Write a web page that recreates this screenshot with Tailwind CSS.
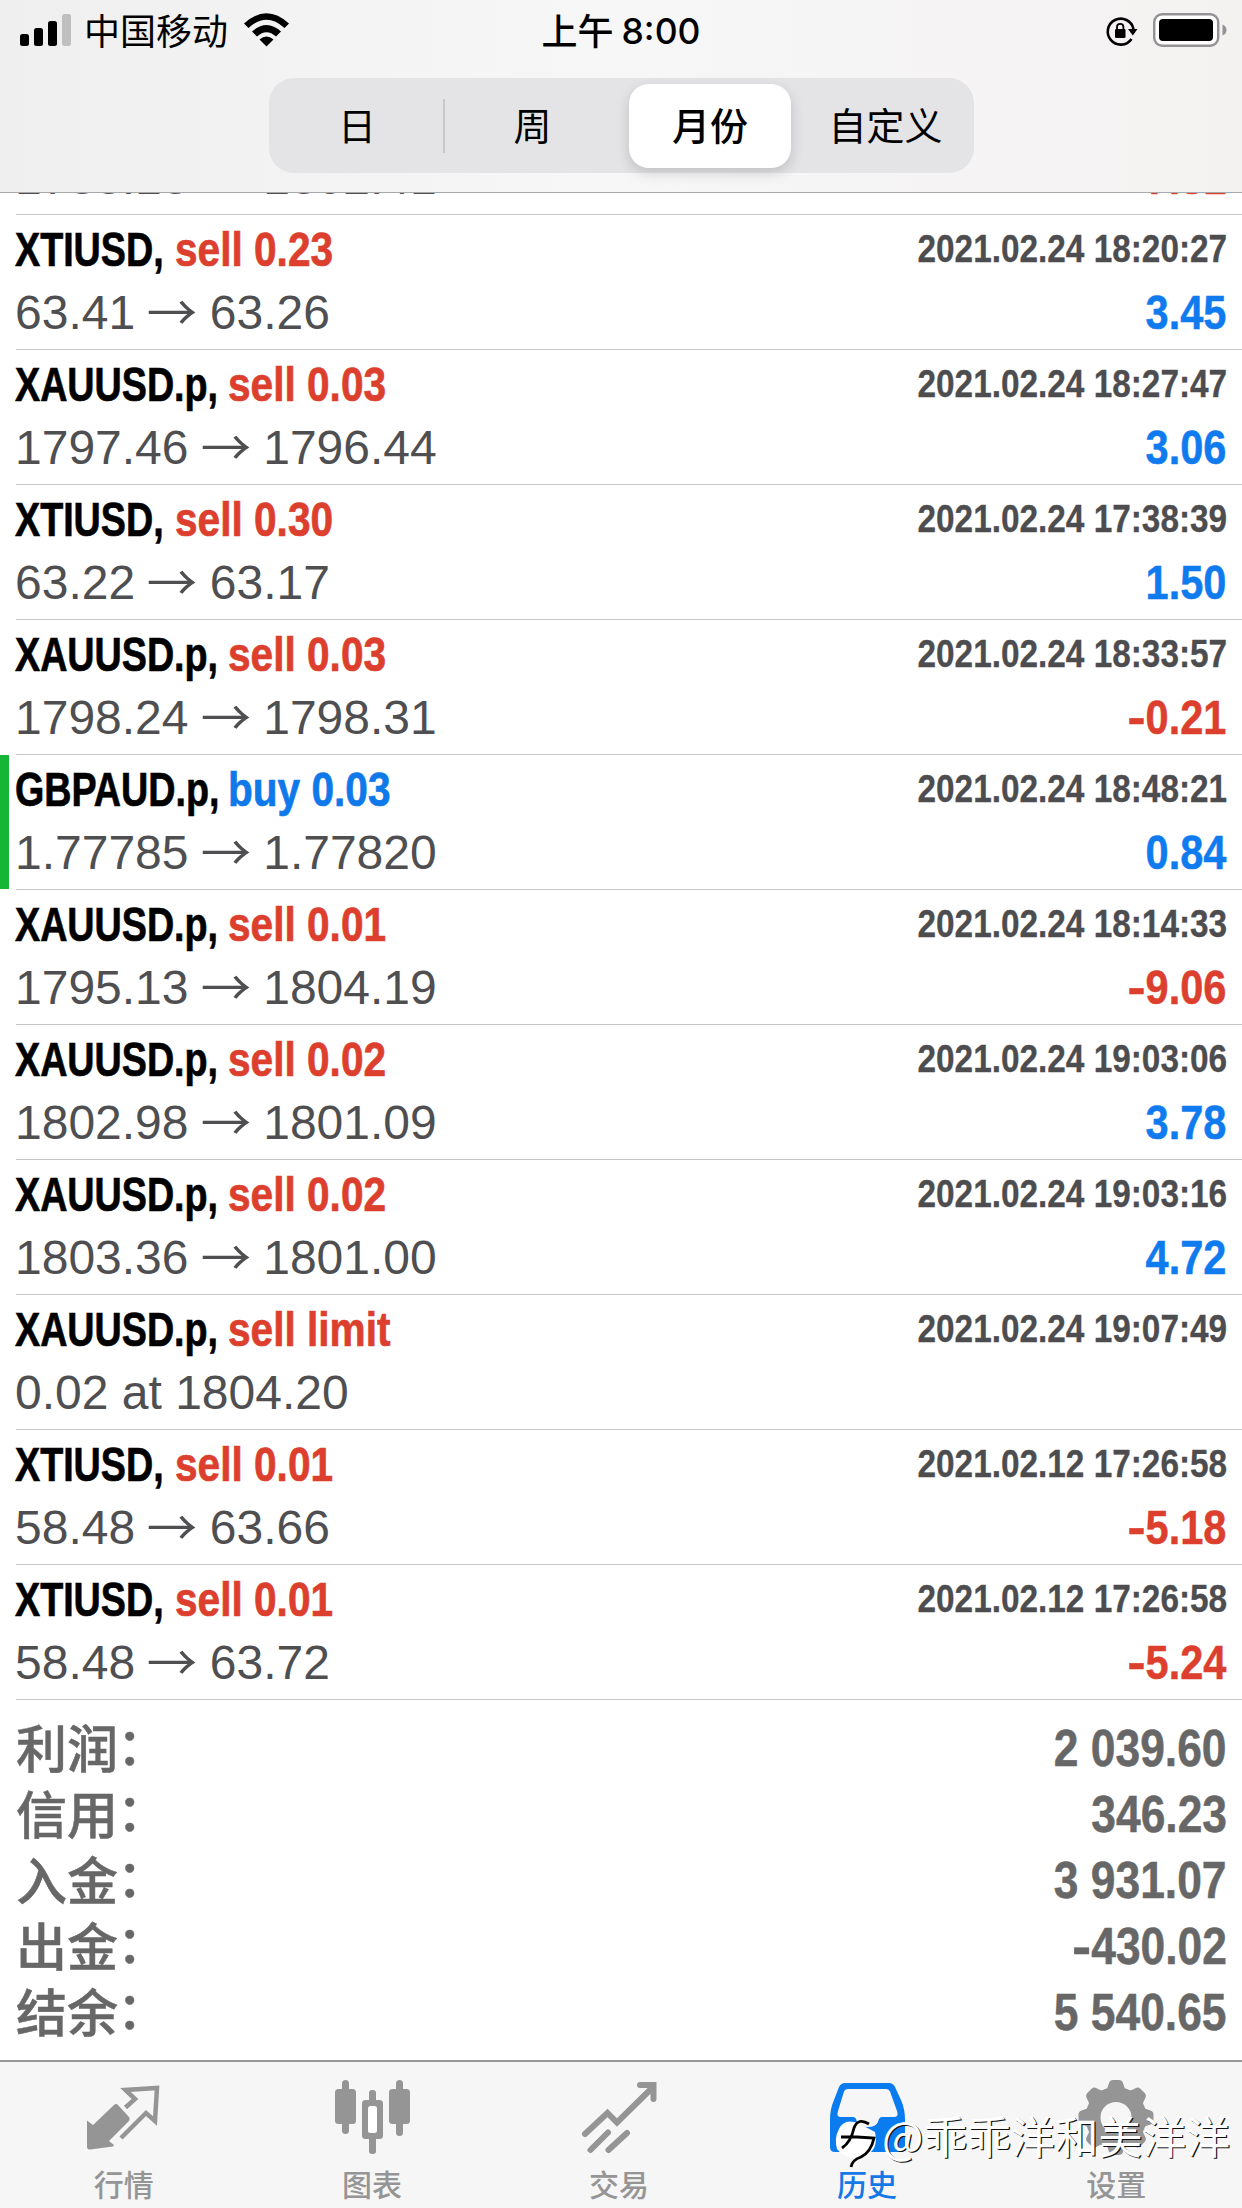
<!DOCTYPE html>
<html lang="zh-CN">
<head>
<meta charset="utf-8">
<title>历史</title>
<script src="https://cdn.jsdelivr.net/npm/@tailwindcss/browser@4"></script>
</head>
<body class="w-[1242px] h-[2208px] overflow-hidden bg-white flex flex-col font-['Liberation_Sans','Noto_Sans_CJK_SC',sans-serif] text-black">

<header class="relative z-10 h-[193px] shrink-0 border-b border-[#a9a9ab] bg-linear-to-r from-[#efefef] via-[#f7f7f8] to-[#f4f1f1] font-['Noto_Sans_CJK_SC',sans-serif]">
  <div class="h-[78px] grid grid-cols-3">
    <div class="flex items-start pl-5 pt-3">
      <svg class="w-[52px] h-[36px]" viewBox="0 0 52 36"><rect x="0" y="22" width="9" height="12" rx="2.5"/><rect x="14" y="16" width="9" height="18" rx="2.5"/><rect x="28" y="9" width="9" height="25" rx="2.5"/><rect x="42" y="2" width="9" height="32" rx="2.5" fill="#bfbfbf"/></svg>
      <span class="ml-3 text-[36px] leading-[35px]">中国移动</span>
      <svg class="ml-[15px] w-[47px] h-[36px]" viewBox="0 0 47 36"><path d="M1 11.500Q23.500-9 46 11.500L41.500 16Q23.500-.5 5.500 16Z"/><path d="M9 19.500Q23.500 6.500 38 19.500L33 24.500Q23.500 16 14 24.500Z"/><path d="M16.500 27.500Q23.500 21.500 30.500 27.500L23.500 34.500Z"/></svg>
    </div>
    <div class="flex justify-center pt-3 text-[36px] leading-[35px] font-medium">上午<span class="ml-2 pt-[2px] font-['Inter'] text-[35.500px]">8:00</span></div>
    <div class="flex justify-end pr-[15px] pt-3">
      <svg class="w-[34px] h-[36px]" viewBox="0 0 34 36"><path d="M26.500 27A13 13 0 1 1 28.500 17" fill="none" stroke="#000" stroke-width="2.6"/><path d="M23 17h9.500l-4.700 6.500z"/><rect x="10" y="17" width="10.500" height="9" rx="1.200"/><path d="M12 18v-3a3.200 3.200 0 0 1 6.400 0v3" fill="none" stroke="#000" stroke-width="1.800"/></svg>
      <svg class="ml-[14px] w-[74px] h-[36px]" viewBox="0 0 74 36"><rect x="1.200" y="2.200" width="64" height="31.500" rx="8" fill="#fff" stroke="#949294" stroke-width="2.400"/><rect x="6" y="7" width="54" height="22" rx="4"/><path d="M69.500 12.500q4 1.500 4 5.500t-4 5.500z" fill="#949294"/></svg>
    </div>
  </div>
  <div class="ml-[269px] w-[705px] h-[95px] rounded-[25px] bg-[#e4e4e6] p-[6px] grid grid-cols-[170px_184px_165px_1fr] text-[38px] leading-[80px] text-center">
    <span class="relative pr-[6px]">日<i class="absolute right-0 top-[15px] h-[54px] w-[2px] bg-[#c9c9cc]"></i></span>
    <span class="pr-[9px]">周</span>
    <span class="h-[84px] w-[162px] rounded-[20px] bg-white font-medium shadow-[0_5px_14px_rgba(0,0,0,0.16)]">月份</span>
    <span class="pl-[9px]">自定义</span>
  </div>
</header>

<main class="h-[1867px] shrink-0 overflow-hidden">
  <section id="deals" class="-mt-[113px] pl-4"></section>
  <section id="totals" class="pl-4 pr-[15px] pt-4 text-[#676767] text-[51px]"></section>
</main>

<footer class="relative h-[148px] shrink-0 border-t-2 border-[#98989b] bg-[#f6f6f6] grid grid-cols-5 text-[#959595] font-['Noto_Sans_CJK_SC',sans-serif] text-[30px] font-medium leading-[38px] text-center">
  <div class="-ml-px flex flex-col items-center gap-[6px] pt-3">
    <svg class="w-[78px] h-[84px]" viewBox="0 0 78 84"><path d="M2 46.500L8 51 29 31q2-2 4 0L44 43q1.500 2 0 4L24 67l5 4-1 1.500L5 75.500q-3 .500-3-3z" fill="currentColor"/><path d="M40.500 33.500L50 25 40.500 16 72 14 70 47 61 39 36 64" fill="none" stroke="currentColor" stroke-width="4.500"/></svg>
    <span>行情</span>
  </div>
  <div class="-ml-px flex flex-col items-center gap-[6px] pt-3">
    <svg class="w-[78px] h-[84px]" viewBox="0 0 78 84" fill="currentColor"><rect x="9" y="6" width="7" height="54" rx="3.500"/><rect x="2" y="15" width="21" height="35" rx="3.500"/><rect x="63" y="6" width="7" height="56" rx="3.500"/><rect x="56" y="15" width="21" height="35" rx="3.500"/><rect x="36" y="16" width="7" height="64" rx="3"/><rect x="29" y="26" width="21" height="39" rx="3.500"/><rect x="35" y="32" width="9" height="27" rx="2.500" fill="#fff"/></svg>
    <span>图表</span>
  </div>
  <div class="-ml-[4px] flex flex-col items-center gap-[6px] pt-3">
    <svg class="w-[78px] h-[84px]" viewBox="0 0 78 84" fill="none" stroke="currentColor" stroke-width="6" stroke-linecap="round"><path d="M5 60L27.500 39 37 48.500 73 13"/><path d="M60 11H73.500V25"/><path d="M10.500 76L28 58.500M28.500 76L47 59"/></svg>
    <span>交易</span>
  </div>
  <div class="-ml-[5px] flex flex-col items-center gap-[6px] pt-3 text-[#1478e6]">
    <svg class="w-[78px] h-[84px]" viewBox="0 0 78 84"><path d="M17 9H61Q65 9 67 13L73 26Q77 35 77 46V73Q77 78 72 78H7Q2 78 2 73V46Q2 35 6 26L11 13Q13 9 17 9Z" fill="#0a7cf0"/><path d="M19.500 15H58.500Q61 15 62 17.500L69 37Q71 43 66 43H54Q51 43 50 48Q48 53 39.500 53T29 48Q28 43 25 43H13Q8 43 10 37L16 17.500Q17 15 19.500 15Z" fill="#f6f6f6"/></svg>
    <span>历史</span>
  </div>
  <div class="-ml-[3px] flex flex-col items-center gap-[6px] pt-3">
    <svg class="w-[78px] h-[84px]" viewBox="0 0 78 84" fill="currentColor"><g id="gear"></g><circle cx="39" cy="43.500" r="15.500" fill="#f6f6f6"/></svg>
    <span>设置</span>
  </div>
  <div class="absolute left-[834px] top-[46px] flex items-start font-normal text-white whitespace-nowrap">
    <svg class="mt-[8px] w-[48px] h-[54px]" viewBox="0 0 48 54"><path d="M5 13Q10 2 24 7L41 16Q45 35 30 40Q12 45 3 33Q0 22 5 13Z" fill="#fff"/><path d="M35 8Q24 1 20 12Q17 26 8 32M7 21H23L40 22Q37 36 27 41Q18 44 17 51" fill="none" stroke="#000" stroke-width="2.800"/></svg>
    <span class="text-[43.800px] leading-[54px] [text-shadow:1.200px_1.200px_0_#111]">@乖乖洋和美洋洋</span>
  </div>
</footer>

<script>
const deals = [
  ['XAUUSD.p,', 'sell 0.03', '2021.02.24 18:18:18', '1788.18', '1802.41', '-7.81'],
  ['XTIUSD,', 'sell 0.23', '2021.02.24 18:20:27', '63.41', '63.26', '3.45'],
  ['XAUUSD.p,', 'sell 0.03', '2021.02.24 18:27:47', '1797.46', '1796.44', '3.06'],
  ['XTIUSD,', 'sell 0.30', '2021.02.24 17:38:39', '63.22', '63.17', '1.50'],
  ['XAUUSD.p,', 'sell 0.03', '2021.02.24 18:33:57', '1798.24', '1798.31', '-0.21'],
  ['GBPAUD.p,', 'buy 0.03', '2021.02.24 18:48:21', '1.77785', '1.77820', '0.84', true],
  ['XAUUSD.p,', 'sell 0.01', '2021.02.24 18:14:33', '1795.13', '1804.19', '-9.06'],
  ['XAUUSD.p,', 'sell 0.02', '2021.02.24 19:03:06', '1802.98', '1801.09', '3.78'],
  ['XAUUSD.p,', 'sell 0.02', '2021.02.24 19:03:16', '1803.36', '1801.00', '4.72'],
  ['XAUUSD.p,', 'sell limit', '2021.02.24 19:07:49', '0.02 at 1804.20', '', ''],
  ['XTIUSD,', 'sell 0.01', '2021.02.12 17:26:58', '58.48', '63.66', '-5.18'],
  ['XTIUSD,', 'sell 0.01', '2021.02.12 17:26:58', '58.48', '63.72', '-5.24'],
];
const amount = v => v.replace('-', '<span class="inline-block origin-right scale-x-[1.3]">-</span>');

// The first deal is scrolled under the header: only its price line is in reach.
document.getElementById('deals').innerHTML = deals.map(([sym, act, date, a, b, pl, tp], i) => `
  <article class="relative h-[135px] border-b border-[#c6c6c8] pt-[3px] pr-4">
    ${tp ? '<i class="absolute -left-4 top-0 h-[134px] w-[9px] bg-[#15b536]"></i>' : ''}
    <div class="-ml-px h-[63px] flex text-[48px] leading-[63px] font-bold whitespace-nowrap [-webkit-text-stroke:0.7px_currentColor]">
      ${i === 0 ? '' : `
      <div class="${sym === 'XTIUSD,' ? 'w-[160px]' : 'w-[213px]'}"><span class="inline-block origin-left scale-x-[0.785]">${sym}</span></div>
      <div class="w-[200px] ${act.startsWith('buy') ? 'text-[#1079ea]' : 'text-[#dc3f2e]'}"><span class="inline-block origin-left scale-x-[0.846]">${act}</span></div>
      <div class="grow flex justify-end text-[39px] leading-[61px] text-[#4d4d50] [-webkit-text-stroke:0.3px_currentColor]"><span class="-mr-px inline-block origin-right scale-x-[0.855]">${date}</span></div>`}
    </div>
    <div class="-ml-px h-[63px] flex justify-between text-[48px] leading-[63px] text-[#4f4f52] whitespace-nowrap">
      <div>${b ? `${a} <span class="inline-block translate-y-px scale-x-[1.05] font-['Noto_Sans_CJK_SC'] leading-none">→</span> ${b}` : a}</div>
      <div class="inline-block origin-right scale-x-[0.865] font-bold [-webkit-text-stroke:0.5px_currentColor] ${pl.startsWith('-') ? 'text-[#dc3f2e]' : 'text-[#0f7bee]'}">${amount(pl)}</div>
    </div>
  </article>`).join('');

const totals = [['利润', '2 039.60'], ['信用', '346.23'], ['入金', '3 931.07'], ['出金', '-430.02'], ['结余', '5 540.65']];
document.getElementById('totals').innerHTML = totals.map(([k, v]) => `
  <div class="h-[66px] flex justify-between whitespace-nowrap [-webkit-text-stroke:0.5px_currentColor]">
    <div class="flex font-['Noto_Sans_CJK_SC'] font-medium leading-[60px]">${k}<span class="-ml-px leading-[54px]">：</span></div>
    <div class="inline-block origin-right scale-x-[0.87] font-bold leading-[66px]">${amount(v)}</div>
  </div>`).join('');

document.getElementById('gear').innerHTML = '<circle cx="39" cy="43.500" r="30.500"/>' +
  Array.from({length: 8}, (_, i) => `<path d="M28 17Q31 14 32 9Q33 6 36 6H42Q45 6 46 9Q47 14 50 17Z" transform="rotate(${i * 45} 39 43.500)"/>`).join('');
</script>
</body>
</html>
